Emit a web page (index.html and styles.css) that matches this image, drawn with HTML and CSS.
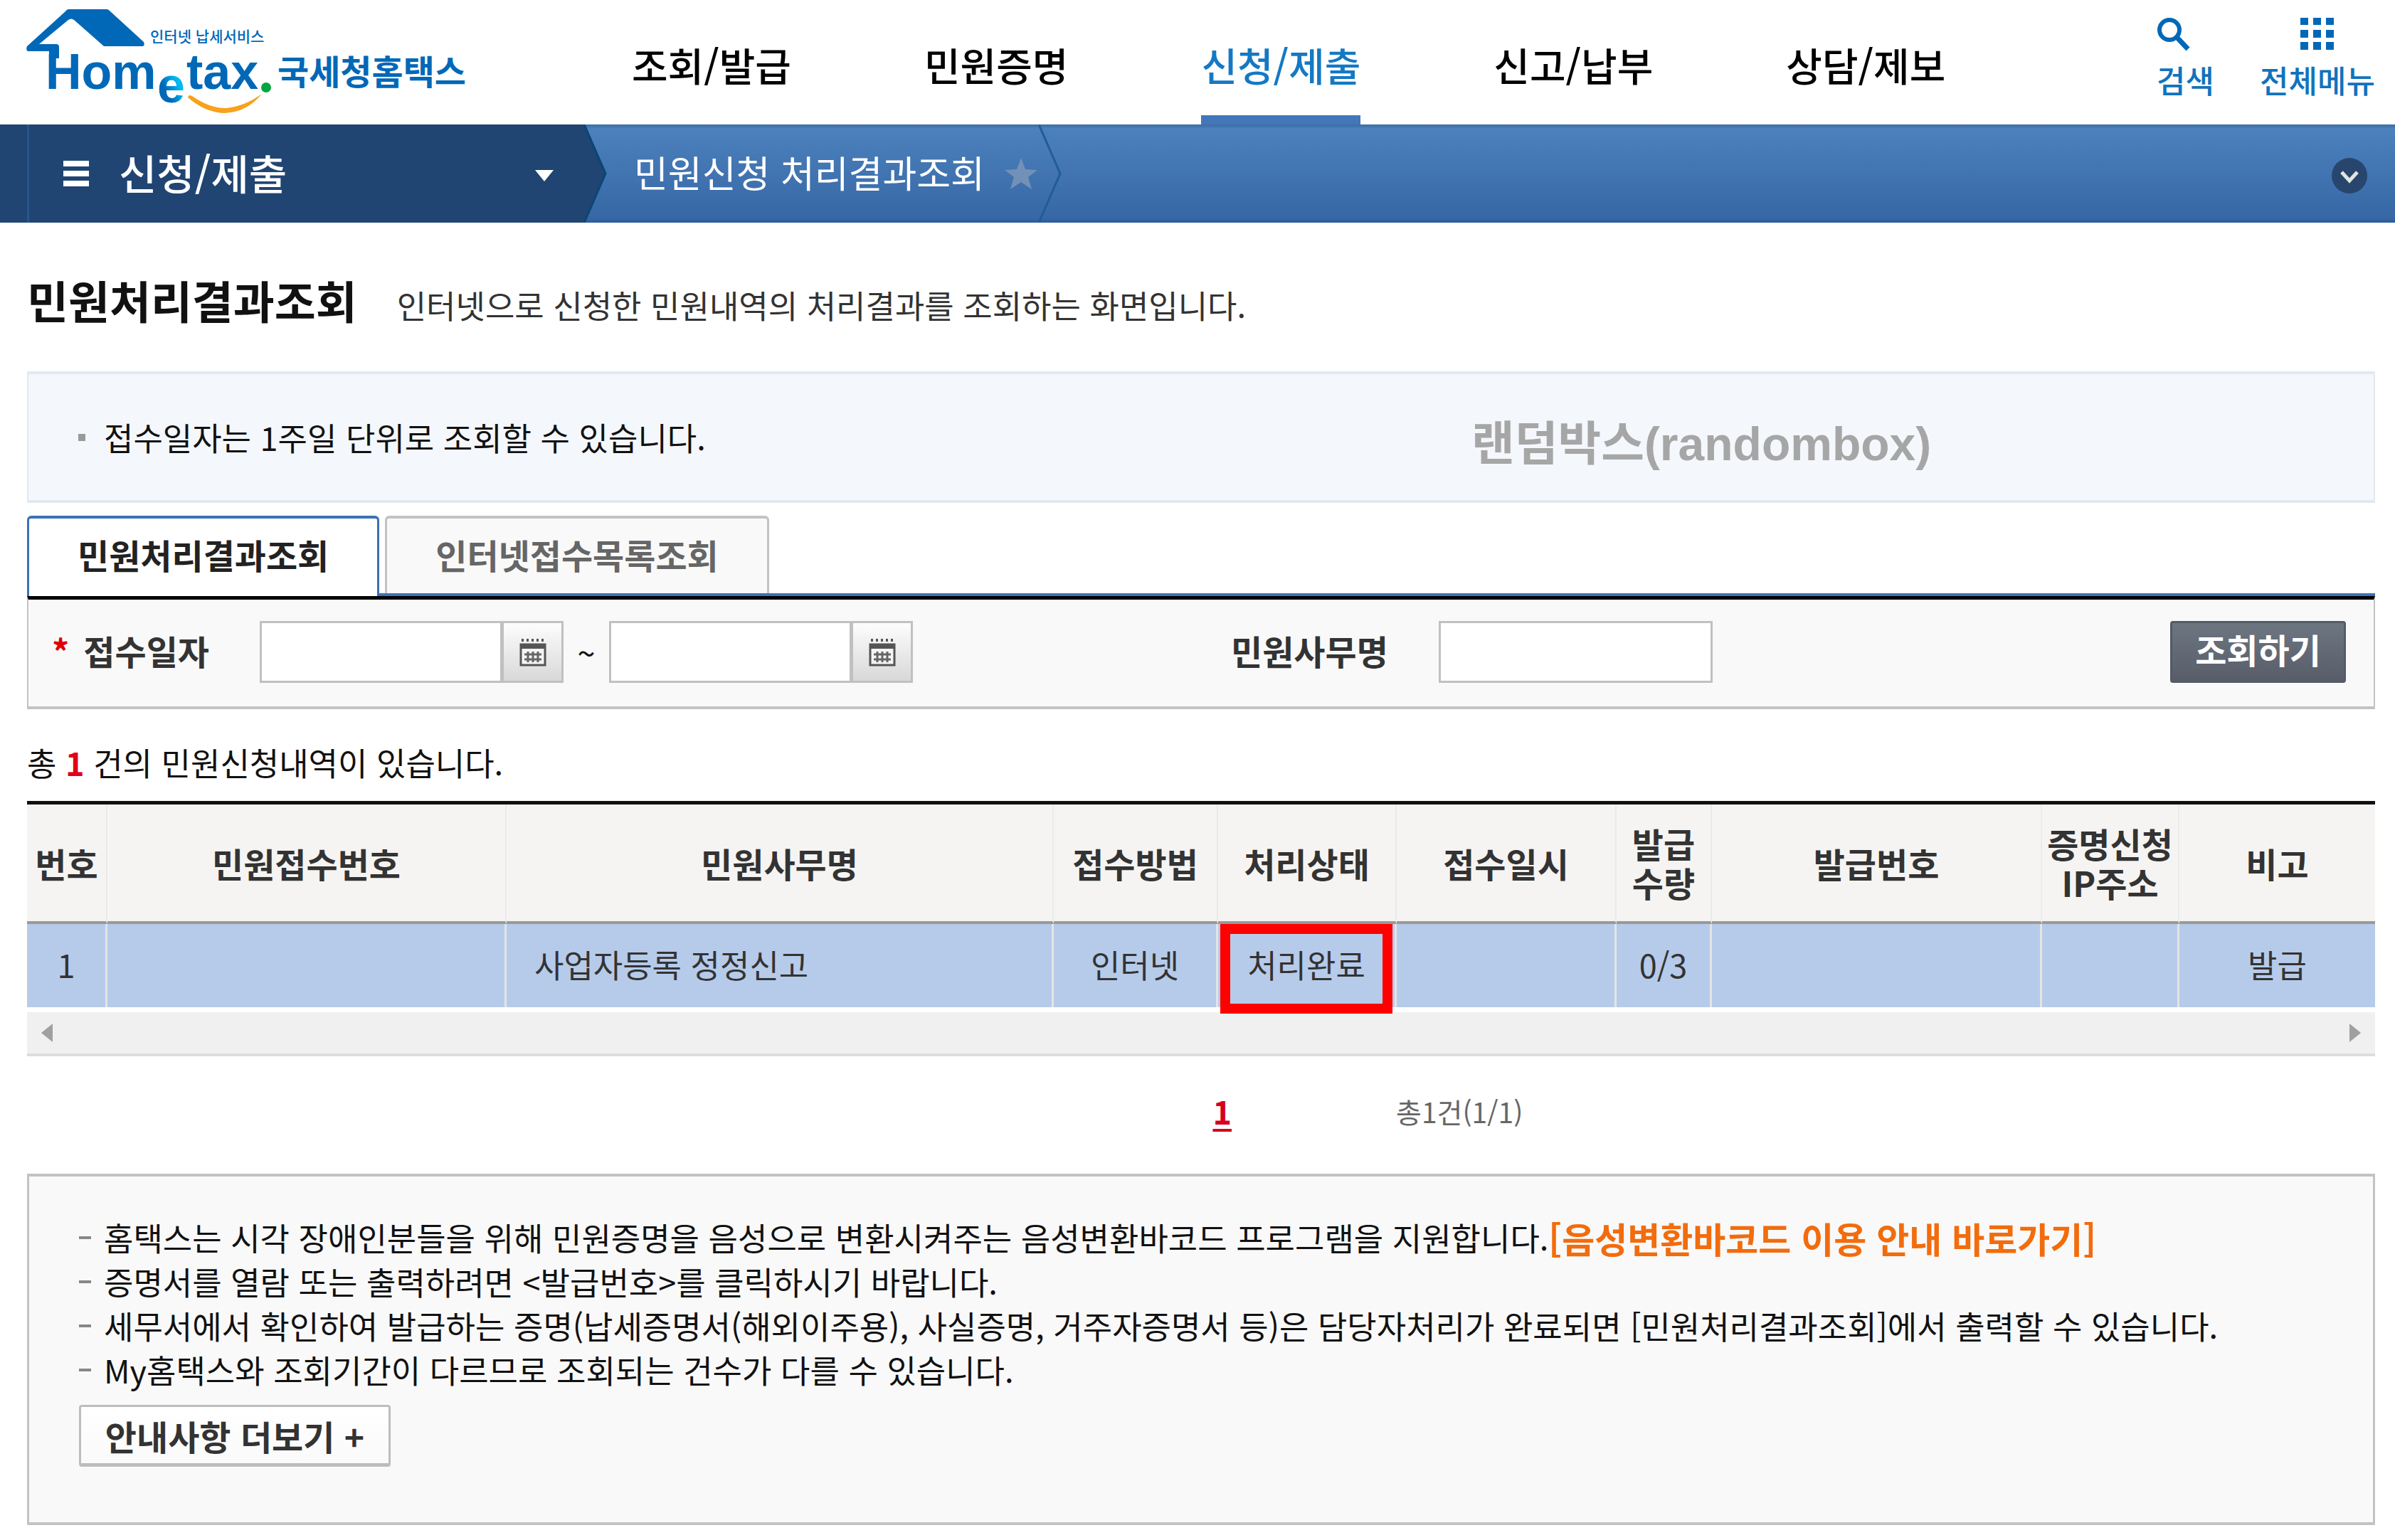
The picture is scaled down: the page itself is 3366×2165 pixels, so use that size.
FILE: index.html
```html
<!DOCTYPE html>
<html lang="ko">
<head>
<meta charset="utf-8">
<title>민원처리결과조회 - 국세청홈택스</title>
<link rel="stylesheet" href="styles.css">
</head>
<body>
<header class="header">
  <a class="logo" href="#" aria-label="국세청홈택스">
    <svg class="logo-art" viewBox="0 0 624 160" aria-hidden="true">
      <defs>
        <linearGradient id="e-fill" x1="1" y1="0" x2="0" y2="1">
          <stop offset="0.35" stop-color="#00b9f2"/>
          <stop offset="0.65" stop-color="#0068b7"/>
        </linearGradient>
      </defs>
      <path fill="#0068b7" d="M59 13H113Q116 13 118 16L165 59Q167 65 163 65H109L67 28Q63 25 59 28L18 62H42Q46 62 46 66V82H32V72H2Q-1 70 1 65L55 16Q57 13 59 13Z"/>
      <text class="logo-word" x="27" y="125">Hom</text>
      <text class="logo-e" x="184" y="144">e</text>
      <text class="logo-word" x="225" y="125">tax</text>
      <ellipse cx="337" cy="123" rx="7" ry="7" fill="#00a63f"/>
      <path fill="#f9a11b" d="M227 137Q228 132 233 135Q257 152 280 152Q306 150 331 132Q310 158 278 159Q251 158 227 137Z"/>
      <text class="logo-sub" x="174" y="59">인터넷 납세서비스</text>
      <text class="logo-name" x="353" y="119">국세청홈택스</text>
    </svg>
  </a>
  <nav class="nav">
    <a href="#">조회/발급</a>
    <a href="#">민원증명</a>
    <a href="#" class="current">신청/제출</a>
    <a href="#">신고/납부</a>
    <a href="#">상담/제보</a>
  </nav>
  <div class="tools">
    <a class="tool" href="#">
      <svg class="tool-icon" viewBox="0 0 48 48" aria-hidden="true"><circle cx="18" cy="18" r="14" fill="none" stroke="#0068b7" stroke-width="6"/><path d="M28 28L44 45" stroke="#0068b7" stroke-width="7"/></svg>
      검색
    </a>
    <a class="tool tool-menu" href="#">
      <svg class="tool-icon" viewBox="0 0 48 48" fill="#0068b7" aria-hidden="true"><path d="M0 1h11v10H0zM18 1h11v10H18zM36 1h11v10H36zM0 18h11v11H0zM18 18h11v11H18zM36 18h11v11H36zM0 35h11v11H0zM18 35h11v11H18zM36 35h11v11H36z"/></svg>
      전체메뉴
    </a>
  </div>
</header>

<div class="path-bar">
  <button class="path-root" type="button">
    <svg class="burger" viewBox="0 0 36 36" fill="#fff" aria-hidden="true"><path d="M0 0h36v8H0zM0 14h36v8H0zM0 28h36v8H0z"/></svg>
    <span class="path-name">신청/제출</span>
    <svg class="caret" viewBox="0 0 26 16" fill="#fff" aria-hidden="true"><path d="M0 0h26L13 16z"/></svg>
  </button>
  <svg class="arrow" viewBox="0 0 32 138" preserveAspectRatio="none" aria-hidden="true"><path d="M0 0L30 69L0 138z" fill="#204573"/><path d="M0 0L30 69L0 138" fill="none" stroke="#0a4674" stroke-width="3"/></svg>
  <a class="path-page" href="#">민원신청 처리결과조회</a>
  <svg class="star" viewBox="0 0 46 44" fill="#7391b8" aria-hidden="true"><path d="M23 0L29 16L46 17L33 27L38 44L23 34L8 44L13 27L0 17L17 16z"/></svg>
  <svg class="arrow" viewBox="0 0 32 138" preserveAspectRatio="none" aria-hidden="true"><path d="M0 0L30 69L0 138" fill="none" stroke="#205d95" stroke-width="3"/></svg>
  <button class="expand" type="button" aria-label="펼치기">
    <svg viewBox="0 0 50 50" aria-hidden="true"><circle cx="25" cy="25" r="25" fill="#28466d"/><path d="M14 20L25 32L36 20" fill="none" stroke="#e3e5e0" stroke-width="5"/></svg>
  </button>
</div>

<main class="content">
  <div class="heading">
    <h1>민원처리결과조회</h1>
    <p>인터넷으로 신청한 민원내역의 처리결과를 조회하는 화면입니다.</p>
  </div>

  <div class="tip">
    <p>접수일자는 1주일 단위로 조회할 수 있습니다.</p>
    <span class="mark">랜덤박스(randombox)</span>
  </div>

  <div class="tabs">
    <button class="tab active" type="button">민원처리결과조회</button>
    <button class="tab" type="button">인터넷접수목록조회</button>
  </div>

  <form class="search">
    <div class="dates">
      <label class="label" for="from"><span class="must">*</span>접수일자</label>
      <div class="date">
        <input id="from" class="box" type="text">
        <button class="cal" type="button" aria-label="시작일 선택">
          <svg viewBox="0 0 38 40" aria-hidden="true"><path stroke="#555" stroke-width="4" stroke-dasharray="3 4" d="M3 3H37"/><rect x="2" y="9" width="34" height="29" fill="#f4f4f4" stroke="#555" stroke-width="3"/><path fill="#555" d="M1 8h36v7H1z"/><path stroke="#666" stroke-width="3" d="M7 23h24M7 30h24M12 19v15M19 19v15M26 19v15"/></svg>
        </button>
      </div>
      <span class="tilde">~</span>
      <div class="date">
        <input class="box" type="text" aria-label="접수일자 종료일">
        <button class="cal" type="button" aria-label="종료일 선택">
          <svg viewBox="0 0 38 40" aria-hidden="true"><path stroke="#555" stroke-width="4" stroke-dasharray="3 4" d="M3 3H37"/><rect x="2" y="9" width="34" height="29" fill="#f4f4f4" stroke="#555" stroke-width="3"/><path fill="#555" d="M1 8h36v7H1z"/><path stroke="#666" stroke-width="3" d="M7 23h24M7 30h24M12 19v15M19 19v15M26 19v15"/></svg>
        </button>
      </div>
    </div>
    <div class="duty">
      <label class="label" for="duty">민원사무명</label>
      <input id="duty" class="box wide" type="text">
    </div>
    <button class="submit" type="button">조회하기</button>
  </form>

  <p class="count">총 <strong>1</strong> 건의 민원신청내역이 있습니다.</p>

  <table class="grid">
    <colgroup>
      <col class="c-no"><col class="c-receipt"><col class="c-duty"><col class="c-way"><col class="c-state"><col class="c-time"><col class="c-qty"><col class="c-issue"><col class="c-ip"><col class="c-note">
    </colgroup>
    <thead>
      <tr><th>번호</th><th>민원접수번호</th><th>민원사무명</th><th>접수방법</th><th>처리상태</th><th>접수일시</th><th>발급<br>수량</th><th>발급번호</th><th>증명신청<br>IP주소</th><th>비고</th></tr>
    </thead>
    <tbody>
      <tr><td>1</td><td></td><td class="left">사업자등록 정정신고</td><td>인터넷</td><td class="marked">처리완료</td><td></td><td>0/3</td><td></td><td></td><td>발급</td></tr>
    </tbody>
  </table>
  <div class="scroll">
    <svg viewBox="0 0 16 26" fill="#a0a0a0" aria-hidden="true"><path d="M16 0v26L0 13z"/></svg>
    <svg viewBox="0 0 16 26" fill="#a0a0a0" aria-hidden="true"><path d="M0 0v26L16 13z"/></svg>
  </div>

  <div class="pager">
    <a class="page" href="#">1</a>
    <span class="total">총1건(1/1)</span>
  </div>

  <section class="notes">
    <ul>
      <li>홈택스는 시각 장애인분들을 위해 민원증명을 음성으로 변환시켜주는 음성변환바코드 프로그램을 지원합니다.<a href="#">[음성변환바코드 이용 안내 바로가기]</a></li>
      <li>증명서를 열람 또는 출력하려면 &lt;발급번호&gt;를 클릭하시기 바랍니다.</li>
      <li>세무서에서 확인하여 발급하는 증명(납세증명서(해외이주용), 사실증명, 거주자증명서 등)은 담당자처리가 완료되면 [민원처리결과조회]에서 출력할 수 있습니다.</li>
      <li>My홈택스와 조회기간이 다르므로 조회되는 건수가 다를 수 있습니다.</li>
    </ul>
    <button class="more" type="button">안내사항 더보기 +</button>
  </section>
</main>
</body>
</html>
```

FILE: styles.css
```css
* { box-sizing: border-box; }
body {
  margin: 0;
  background: #fff;
  color: #111;
  font: 45px/62px "Noto Sans CJK KR", sans-serif;
}
h1, p, ul { margin: 0; padding: 0; }
a { color: inherit; text-decoration: none; }
button, input { font: inherit; color: inherit; margin: 0; padding: 0; }
button { white-space: nowrap; }
svg { display: block; flex: none; }

/* top header */
.header { display: flex; height: 175px; padding: 0 28px 0 37px; }
.logo-art { width: 624px; height: 160px; }
.logo-word, .logo-e { font: bold 70px "Liberation Sans", sans-serif; fill: #0068b7; }
.logo-e { fill: url(#e-fill); }
.logo-sub { font: 500 21px "Noto Sans CJK KR", sans-serif; fill: #0068b7; }
.logo-name { font: bold 48px "Noto Sans CJK KR", sans-serif; fill: #0068b7; }
.nav { display: flex; gap: 187px; margin-left: 227px; font-size: 55px; font-weight: 500; color: #000; }
.nav a { padding-top: 59px; }
.nav .current { color: #1479c4; border-bottom: 13px solid #4377b9; }
.tools { display: flex; gap: 64px; margin-left: auto; font-size: 44px; line-height: 56px; font-weight: 500; color: #1173bd; }
.tool { display: flex; flex-direction: column; gap: 12px; padding-top: 24px; }
.tool-icon { width: 48px; height: 48px; }
.tool-menu .tool-icon { align-self: center; }

/* breadcrumb bar */
.path-bar {
  display: flex;
  align-items: center;
  height: 138px;
  padding-right: 39px;
  background: linear-gradient(#3b6ca5 0, #4b81bd 6px, #3767a5 132px, #2a5b9c 100%);
}
.path-root {
  display: flex;
  align-items: center;
  align-self: stretch;
  width: 821px;
  padding: 0 43px 0 89px;
  border: 0;
  background: linear-gradient(90deg, transparent 38px, #28568c 38px, #28568c 41px, transparent 41px), #204573;
  color: #fff;
  font-size: 58px;
  font-weight: 500;
}
.burger { width: 36px; height: 36px; margin-right: 42px; }
.path-name, .path-page { padding-bottom: 4px; }
.caret { width: 26px; height: 16px; margin: 6px 0 0 auto; }
.arrow { width: 32px; height: 138px; }
.path-page { margin: 0 28px 0 38px; color: #fff; font-size: 52px; }
.star { width: 46px; height: 44px; margin-right: 2px; }
.expand { width: 50px; height: 50px; margin: 6px 0 0 auto; border: 0; background: none; }

/* page body */
.content { padding: 0 28px 22px 38px; }
.heading { display: flex; align-items: baseline; gap: 56px; padding: 76px 0 62px; }
.heading h1 { font-size: 63px; line-height: 64px; font-weight: 700; }
.heading p { color: #333; }

.tip {
  display: grid;
  grid-template-columns: 1fr 1fr;
  align-items: center;
  height: 185px;
  padding: 0 70px;
  border: solid #e2e9f0;
  border-width: 4px 2px;
  background: #f4f7fc;
}
.tip p { display: flex; align-items: center; gap: 26px; }
.tip p::before { content: ""; width: 10px; height: 10px; background: #999; }
.mark {
  padding: 18px 0 0 380px;
  color: #a6a6a6;
  font-family: "Liberation Sans", "Noto Sans CJK KR", sans-serif;
  font-size: 66px;
  font-weight: 700;
}

.tabs { display: flex; gap: 8px; margin-top: 18px; height: 113px; border-bottom: 4px solid #3a72b5; }
.tab {
  padding: 0 68px 5px;
  border: 3px solid #c3c3c3;
  border-top-width: 4px;
  border-bottom: 0;
  border-radius: 6px 6px 0 0;
  background: #f9f9f9;
  color: #666;
  font-size: 48px;
  font-weight: 700;
}
.tab.active { margin-bottom: -4px; padding-bottom: 9px; border-color: #3a72b5; background: #fff; color: #222; }

.search {
  display: grid;
  grid-template-columns: 1657px 1fr auto;
  align-items: center;
  height: 159px;
  padding: 0 39px 3px 33px;
  border: 2px solid #c3c3c3;
  border-width: 5px 2px 4px;
  border-top-color: #000;
  background: #f9f9f9;
}
.dates, .duty, .date { display: flex; align-items: center; }
.label { width: 292px; padding-bottom: 5px; font-size: 48px; font-weight: 700; color: #333; }
.must { margin-right: 20px; color: #e00000; }
.box { width: 341px; height: 87px; border: 3px solid #c0c0c0; background: #fff; }
.box.wide { width: 385px; }
.cal {
  display: flex;
  align-items: center;
  justify-content: center;
  width: 86px;
  height: 87px;
  border: 3px solid #c0c0c0;
  border-left-width: 2px;
  background: linear-gradient(#fdfdfd, #d8d8d8);
}
.cal svg { width: 38px; height: 40px; }
.tilde { width: 64px; text-align: center; }
.submit {
  width: 247px;
  height: 87px;
  padding-bottom: 10px;
  border: 3px solid #545b66;
  border-radius: 4px;
  background: linear-gradient(#6c7681, #585d69);
  color: #fff;
  font-size: 48px;
  font-weight: 700;
}

.count { margin: 44px 0 23px; }
.count strong { color: #e0001b; }

.grid { width: 100%; border-collapse: separate; border-spacing: 0; table-layout: fixed; border-top: 5px solid #111; color: #333; }
.c-no { width: 113px; }
.c-receipt { width: 561px; }
.c-way { width: 231px; }
.c-state { width: 251px; }
.c-time { width: 309px; }
.c-qty { width: 134px; }
.c-issue { width: 464px; }
.c-ip { width: 193px; }
.c-note { width: 275px; }
.grid th, .grid td { padding: 0; white-space: nowrap; text-align: center; }
.grid th {
  height: 168px;
  border-right: 2px solid #eaeaea;
  border-bottom: 4px solid #999;
  background: #f5f4f2;
  font-size: 48px;
  line-height: 55px;
}
.grid td { height: 117px; padding-bottom: 3px; border-right: 3px solid #e4e4e4; background: #b6cbea; }
.grid .left { padding-left: 39px; text-align: left; }
.grid th:last-child, .grid td:last-child { border-right: 0; }
.marked { position: relative; }
.marked::after { content: ""; position: absolute; inset: 0 3px -9px; border: 14px solid #f00; z-index: 1; }

.scroll {
  display: flex;
  align-items: center;
  justify-content: space-between;
  height: 62px;
  margin-top: 7px;
  padding: 0 20px;
  border-bottom: 4px solid #ddd;
  background: #f0f0f0;
}
.scroll svg { width: 16px; height: 26px; }

.pager { display: grid; grid-template-columns: 1fr 1fr; align-items: center; margin: 46px 0 57px; }
.page { justify-self: end; margin-right: -43px; color: #d6001c; font-weight: 700; text-decoration: underline; text-underline-offset: 6px; }
.total { margin-left: 274px; color: #666; font-size: 39px; }

.notes { height: 494px; padding: 55px 70px 0; border: solid #c3c3c3; border-width: 4px 3px; background: #f9f9f9; }
.notes ul { list-style: none; }
.notes li { display: flex; align-items: center; height: 62px; white-space: nowrap; }
.notes li::before { content: ""; flex: none; width: 17px; height: 4px; margin-right: 18px; background: #888; }
.notes a { color: #f26c0d; font-size: 50px; font-weight: 700; }
.more {
  width: 438px;
  height: 87px;
  margin-top: 18px;
  border: 3px solid #bdbdbd;
  border-bottom-width: 5px;
  border-radius: 4px;
  background: linear-gradient(#fff, #fafafa);
  color: #333;
  font-size: 48px;
  font-weight: 700;
}
```
